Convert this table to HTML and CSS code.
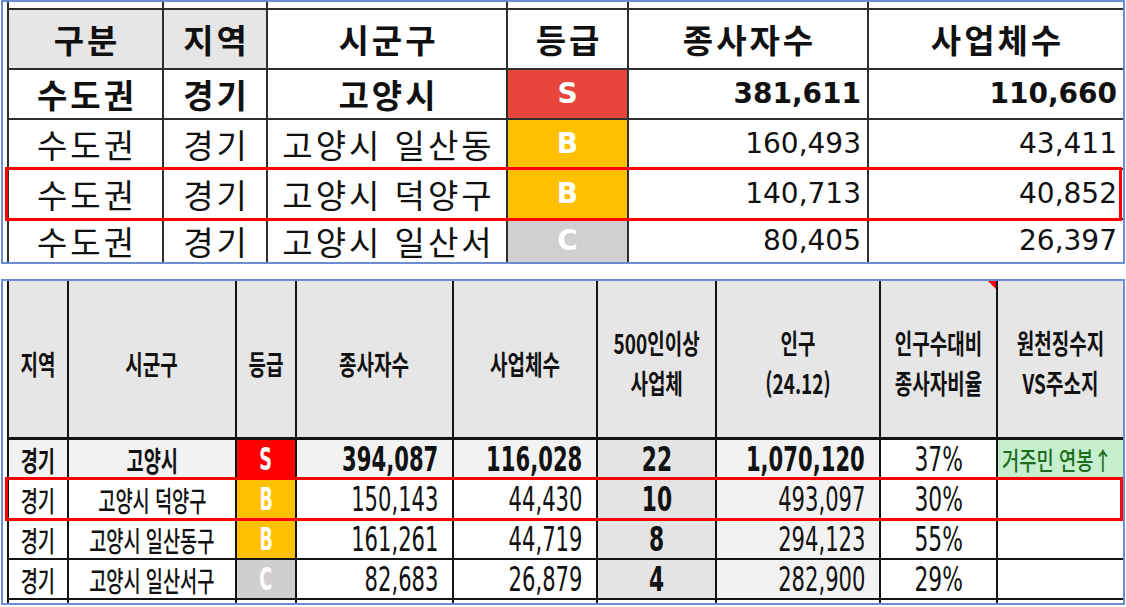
FILE: index.html
```html
<!DOCTYPE html>
<html lang="ko">
<head>
<meta charset="utf-8">
<title>고양시 종사자수 비교</title>
<link rel="stylesheet" href="styles.css">
</head>
<body>
<div class="page">
  <section class="panel panel-top">
    <div class="grid grid-top">
      <div class="c"></div><div class="c"></div><div class="c"></div><div class="c"></div><div class="c"></div><div class="c"></div>

      <div class="c hd"><span class="k bo">구분</span></div>
      <div class="c hd"><span class="k bo">지역</span></div>
      <div class="c"><span class="k bo">시군구</span></div>
      <div class="c"><span class="k bo">등급</span></div>
      <div class="c"><span class="k bo">종사자수</span></div>
      <div class="c"><span class="k bo">사업체수</span></div>

      <div class="c"><span class="k bo">수도권</span></div>
      <div class="c"><span class="k bo">경기</span></div>
      <div class="c"><span class="k bo">고양시</span></div>
      <div class="c gs"><span class="grade">S</span></div>
      <div class="c r"><span class="num bo">381,611</span></div>
      <div class="c r"><span class="num bo">110,660</span></div>

      <div class="c"><span class="k">수도권</span></div>
      <div class="c"><span class="k">경기</span></div>
      <div class="c"><span class="k">고양시 일산동</span></div>
      <div class="c gb"><span class="grade">B</span></div>
      <div class="c r"><span class="num">160,493</span></div>
      <div class="c r"><span class="num">43,411</span></div>

      <div class="c"><span class="k">수도권</span></div>
      <div class="c"><span class="k">경기</span></div>
      <div class="c"><span class="k">고양시 덕양구</span></div>
      <div class="c gb"><span class="grade">B</span></div>
      <div class="c r"><span class="num">140,713</span></div>
      <div class="c r"><span class="num">40,852</span></div>

      <div class="c"><span class="k">수도권</span></div>
      <div class="c"><span class="k">경기</span></div>
      <div class="c"><span class="k">고양시 일산서</span></div>
      <div class="c gc"><span class="grade">C</span></div>
      <div class="c r"><span class="num">80,405</span></div>
      <div class="c r"><span class="num">26,397</span></div>
    </div>
  </section>

  <section class="panel panel-bottom">
    <div class="grid grid-bottom">
      <div class="c hd2"><span class="h">지역</span></div>
      <div class="c hd2"><span class="h">시군구</span></div>
      <div class="c hd2"><span class="h">등급</span></div>
      <div class="c hd2"><span class="h">종사자수</span></div>
      <div class="c hd2"><span class="h">사업체수</span></div>
      <div class="c hd2"><span class="h">500인이상<br>사업체</span></div>
      <div class="c hd2"><span class="h">인구<br>(24.12)</span></div>
      <div class="c hd2 note"><span class="h">인구수대비<br>종사자비율</span></div>
      <div class="c hd2"><span class="h">원천징수지<br>VS주소지</span></div>

      <div class="c lt"><span class="k bo">경기</span></div>
      <div class="c lt"><span class="k bo">고양시</span></div>
      <div class="c rs"><span class="g">S</span></div>
      <div class="c lt r2"><span class="n bo">394,087</span></div>
      <div class="c lt r2"><span class="n bo">116,028</span></div>
      <div class="c dk"><span class="n2 bo">22</span></div>
      <div class="c lt r2"><span class="n bo">1,070,120</span></div>
      <div class="c"><span class="n2">37%</span></div>
      <div class="c green"><span class="gt">거주민 연봉↑</span></div>

      <div class="c"><span class="k">경기</span></div>
      <div class="c"><span class="k">고양시 덕양구</span></div>
      <div class="c yb"><span class="g">B</span></div>
      <div class="c r2"><span class="n">150,143</span></div>
      <div class="c r2"><span class="n">44,430</span></div>
      <div class="c dk"><span class="n2 bo">10</span></div>
      <div class="c lt r2"><span class="n">493,097</span></div>
      <div class="c"><span class="n2">30%</span></div>
      <div class="c"></div>

      <div class="c"><span class="k">경기</span></div>
      <div class="c"><span class="k">고양시 일산동구</span></div>
      <div class="c yb"><span class="g">B</span></div>
      <div class="c r2"><span class="n">161,261</span></div>
      <div class="c r2"><span class="n">44,719</span></div>
      <div class="c dk"><span class="n2 bo">8</span></div>
      <div class="c lt r2"><span class="n">294,123</span></div>
      <div class="c"><span class="n2">55%</span></div>
      <div class="c"></div>

      <div class="c"><span class="k">경기</span></div>
      <div class="c"><span class="k">고양시 일산서구</span></div>
      <div class="c gy"><span class="g">C</span></div>
      <div class="c r2"><span class="n">82,683</span></div>
      <div class="c r2"><span class="n">26,879</span></div>
      <div class="c dk"><span class="n2 bo">4</span></div>
      <div class="c lt r2"><span class="n">282,900</span></div>
      <div class="c"><span class="n2">29%</span></div>
      <div class="c"></div>

      <div class="c"></div><div class="c"></div><div class="c"></div><div class="c"></div><div class="c"></div><div class="c"></div><div class="c"></div><div class="c"></div><div class="c"></div>
    </div>
  </section>

  <div class="mark mark-top"></div>
  <div class="mark mark-bottom"></div>
</div>
</body>
</html>
```

FILE: styles.css
```css
* { box-sizing: border-box; margin: 0; padding: 0; }
html, body { background: #fff; }
body {
  width: 1126px;
  height: 607px;
  overflow: hidden;
  font-family: "Noto Sans CJK KR", "Noto Sans", sans-serif;
  color: #111;
}
.page { position: relative; width: 1126px; height: 607px; }

.panel {
  margin-left: 1px;
  width: 1124px;
  border: 2px solid #6c8ed0;
  padding-left: 4px;
  overflow: hidden;
  background: #fff;
}
.panel-top { height: 264px; }
.panel-bottom { height: 326px; margin-top: 15px; }

.grid {
  display: grid;
  gap: 2px;
  padding-left: 2px;
  height: 100%;
}
.grid-top {
  background: #2e2e2e;
  grid-template-columns: 153px 102px 238px 119px 238px 1fr;
  grid-template-rows: 6px 58px 48px 48px 48px 1fr;
}
.grid-bottom {
  background: #141414;
  grid-template-columns: 58px 166px 58px 155px 142px 117px 162px 115px 1fr;
  grid-template-rows: 157px 38px 38px 38px 38px 1fr;
}

.c {
  display: flex;
  align-items: center;
  justify-content: center;
  background: #fff;
  white-space: nowrap;
  min-width: 0;
  line-height: 1;
}
.bo { font-weight: 700; }

/* top table */
.hd { background: #e6e6e6; }
.grid-top .r { justify-content: flex-end; padding-right: 6px; }
.k { font-size: 33px; letter-spacing: 3px; padding-left: 3px; }
.num { font-family: "DejaVu Sans", sans-serif; font-size: 28px; }
.grade {
  font-family: "DejaVu Sans", sans-serif;
  font-weight: 700;
  font-size: 28px;
  color: #fff;
}
.gs { background: #e8463a; }
.gb { background: #ffc000; }
.gc { background: #d0d0d0; }

/* bottom table */
.grid-bottom .c > span { display: inline-block; }
.hd2 {
  background: #e7e6e6;
  border-bottom: 1px solid #141414;
  padding-top: 8px;
  position: relative;
}
.note::after {
  content: "";
  position: absolute;
  top: 0;
  right: 0;
  width: 8px;
  height: 8px;
  background: #ff0000;
  clip-path: polygon(0 0, 100% 0, 100% 100%);
}
.grid-bottom .h {
  font-size: 25px;
  font-weight: 700;
  line-height: 37px;
  text-align: center;
  transform: scale(0.76, 1.08);
}
.grid-bottom .k {
  font-size: 27px;
  font-weight: 500;
  letter-spacing: 0;
  padding-left: 0;
  transform: scale(0.69, 1.05);
}
.grid-bottom .k.bo { font-weight: 700; }
.grid-bottom .r2 { justify-content: flex-end; padding-right: 14px; }
.grid-bottom .n,
.grid-bottom .n2 {
  font-family: "DejaVu Sans", sans-serif;
  font-size: 33px;
}
.grid-bottom .n {
  transform: scaleX(0.64);
  transform-origin: right center;
}
.grid-bottom .n2 { transform: scaleX(0.66); }
.grid-bottom .g {
  font-family: "DejaVu Sans", sans-serif;
  font-size: 32px;
  font-weight: 700;
  color: #fff;
  transform: scaleX(0.55);
}
.lt { background: #f2f2f2; }
.grid-bottom .dk { background: #e4e4e4; }
.rs { background: #ff0000; }
.yb { background: #ffc000; }
.gy { background: #d0cece; }
.green { background: #c6efce; justify-content: flex-start; padding-left: 4px; }
.gt {
  font-size: 25px;
  font-weight: 500;
  color: #1e6b1e;
  transform: scaleX(0.75);
  transform-origin: left center;
}

/* highlight boxes drawn over the rows */
.mark {
  position: absolute;
  border: 3px solid #ff0000;
  pointer-events: none;
}
.mark-top { left: 5px; top: 167px; width: 1117px; height: 54px; }
.mark-bottom { left: 5px; top: 477px; width: 1118px; height: 44px; }
```
